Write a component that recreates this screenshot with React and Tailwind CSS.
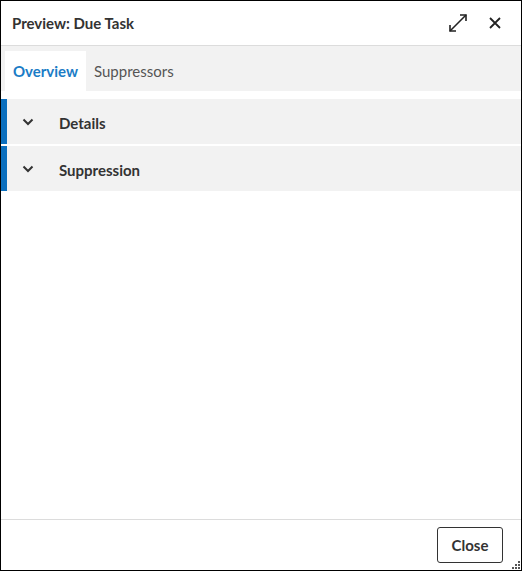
import React, { useState } from 'react';

const font = { fontFamily: 'Lato, "Noto Sans", sans-serif' };

const Chevron = () => (
  <svg width="12" height="8" viewBox="0 0 12 8" className="text-[#333]">
    <path d="M1.5 1.5 L6 6 L10.5 1.5" fill="none" stroke="currentColor" strokeWidth="2" />
  </svg>
);

const ExpandIcon = () => (
  <svg width="22" height="22" viewBox="0 0 22 22" className="text-[#222]">
    <path d="M3 19 L19 3" stroke="currentColor" strokeWidth="1.6" />
    <path d="M13 3 H19 V9" fill="none" stroke="currentColor" strokeWidth="1.6" />
    <path d="M3 13 V19 H9" fill="none" stroke="currentColor" strokeWidth="1.6" />
  </svg>
);

const CloseIcon = () => (
  <svg width="14" height="14" viewBox="0 0 14 14" className="text-[#222]">
    <path d="M2 2 L12 12 M12 2 L2 12" stroke="currentColor" strokeWidth="1.8" />
  </svg>
);

const Section = ({ title }) => (
  <div className="flex items-center h-[45px] bg-[#f2f2f2] border-l-[6px] border-[#0b6fbe] mb-[2px]">
    <div className="w-[42px] mr-[10px] flex justify-center">
      <Chevron />
    </div>
    <span className="text-[15px] font-bold text-[#333] pt-[3px]">{title}</span>
  </div>
);

export default function App() {
  const [tab, setTab] = useState('overview');

  return (
    <div className="w-[522px] h-[571px] border border-black bg-white flex flex-col relative" style={font}>
      <div className="h-[45px] flex items-center justify-between pl-[11px] pr-[19px] border-b border-[#dcdcdc]">
        <span className="text-[15px] font-bold text-[#333] pt-[1px]">Preview: Due Task</span>
        <div className="flex items-center gap-[19px]">
          <ExpandIcon />
          <CloseIcon />
        </div>
      </div>

      <div className="h-[45px] bg-[#f2f2f2] flex items-end pl-[4px]">
        <button
          onClick={() => setTab('overview')}
          className={`h-[40px] w-[81px] text-[15px] ${tab === 'overview' ? 'bg-white text-[#1b7cc6] font-bold' : 'text-[#555]'}`}
        >
          Overview
        </button>
        <button
          onClick={() => setTab('suppressors')}
          className={`h-[40px] px-[8px] text-[15px] ${tab === 'suppressors' ? 'bg-white text-[#1b7cc6] font-bold' : 'text-[#555]'}`}
        >
          Suppressors
        </button>
      </div>

      <div className="flex-1 pt-[8px]">
        <Section title="Details" />
        <Section title="Suppression" />
      </div>

      <div className="h-[51px] border-t border-[#dcdcdc] flex items-center justify-end pr-[18px]">
        <button className="h-[36px] w-[66px] border-[1.5px] border-[#333] rounded-[3px] text-[15px] font-bold text-[#333] bg-white">
          Close
        </button>
      </div>

      <svg width="8" height="8" viewBox="0 0 8 8" className="absolute right-[1px] bottom-[1px] text-[#555]">
        <rect x="6" y="0" width="2" height="2" fill="currentColor" />
        <rect x="3" y="3" width="2" height="2" fill="currentColor" />
        <rect x="6" y="3" width="2" height="2" fill="currentColor" />
        <rect x="0" y="6" width="2" height="2" fill="currentColor" />
        <rect x="3" y="6" width="2" height="2" fill="currentColor" />
        <rect x="6" y="6" width="2" height="2" fill="currentColor" />
      </svg>
    </div>
  );
}
